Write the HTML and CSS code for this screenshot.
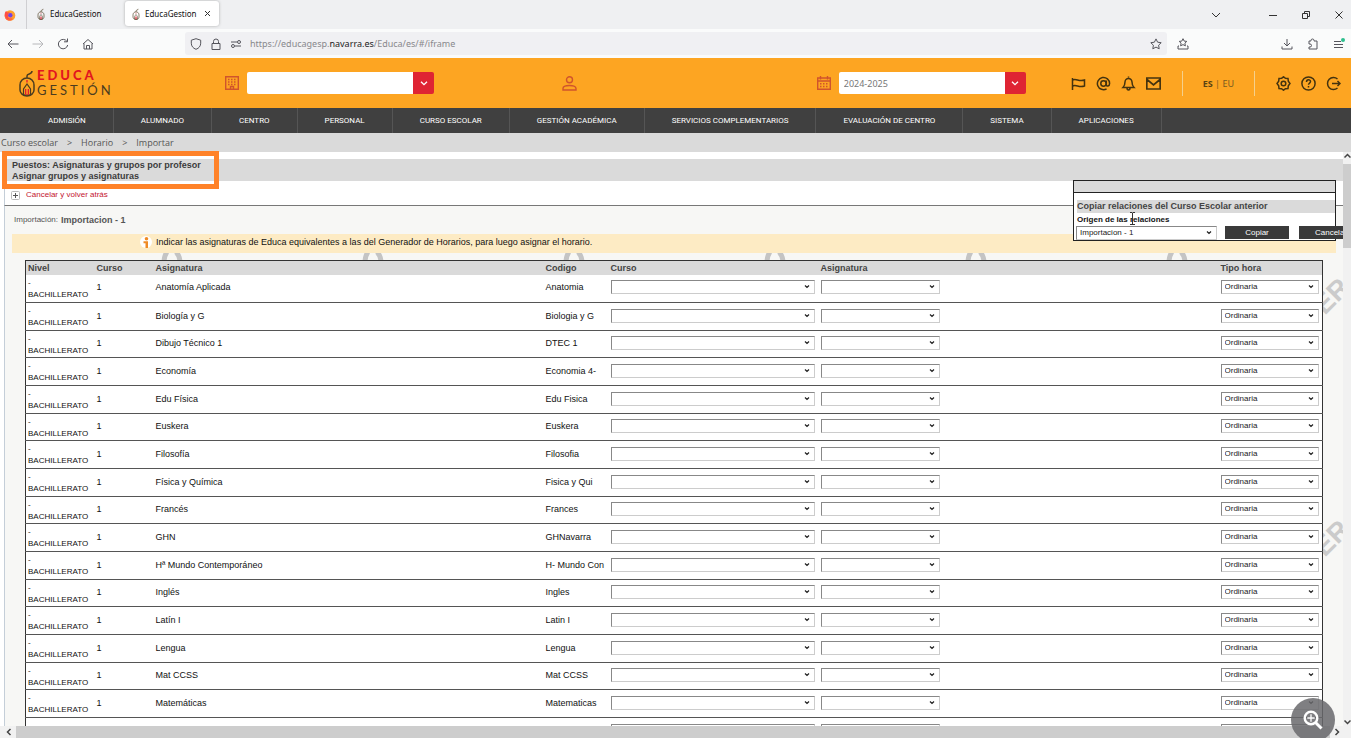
FILE: index.html
```html
<!DOCTYPE html>
<html lang="es">
<head>
<meta charset="utf-8">
<title>EducaGestion</title>
<link rel="stylesheet" href="styles.css">
</head>
<body>
<svg class="sprite" aria-hidden="true">
  <symbol id="mouse" viewBox="0 0 18 28"><path d="M9 9V7c0-3 5-1 5-5M9 9c-4 0-7 3-7 7v5c0 3 3 6 7 6s7-3 7-6v-5c0-4-3-7-7-7z" fill="none" stroke="#4b3c20" stroke-width="1.500"/><path d="M5.500 26v-6L9 15l3.500 5v6z" fill="none" stroke="#4b3c20" stroke-width="1.200"/><path d="M8.300 13.500V11h1.400v2.500M7 20h1.300v6H7zM9.700 20H11v6H9.700z" fill="#e3202f"/></symbol>
</svg>

<div class="tabs">
  <span class="firefox"><svg width="12" height="12" viewBox="0 0 12 12"><circle cx="6" cy="6.500" r="5.300" fill="#ffa02e"/><path d="M.7 5c0 5 4 7 8 5-2 3-9 2-8-5z" fill="#f03a8f"/><path d="M.7 5c0-1 .5-2 1.300-3l1.500 1.500L6 3 4 5v3c1 2 4 2 5 0-1 4-8 4-8.300-3z" fill="#ff4f45"/><circle cx="6.300" cy="6.300" r="2.200" fill="#7542e5"/></svg></span>
  <button class="tab"><svg width="8" height="12"><use href="#mouse"/></svg>EducaGestion</button>
  <button class="tab active"><svg width="8" height="12"><use href="#mouse"/></svg>EducaGestion<svg class="tab-x" width="7" height="7" viewBox="0 0 7 7"><path d="M1 1l5 5M6 1L1 6"/></svg></button>
  <div class="window">
    <button aria-label="Listar pestañas"><svg width="10" height="6" viewBox="0 0 10 6"><path d="M1 1l4 4 4-4"/></svg></button>
    <button class="gap" aria-label="Minimizar"><svg width="8" height="8" viewBox="0 0 8 8"><path d="M0 4.500h8"/></svg></button>
    <button aria-label="Restaurar"><svg width="8" height="8" viewBox="0 0 8 8"><path d="M.5 2.500h5v5h-5zM2.500 2.500v-2h5v5h-2"/></svg></button>
    <button aria-label="Cerrar"><svg width="8" height="8" viewBox="0 0 8 8"><path d="M.5.5l7 7M7.500.5l-7 7"/></svg></button>
  </div>
</div>

<div class="toolbar">
  <div class="navbuttons">
    <button aria-label="Atrás"><svg width="12" height="12" viewBox="0 0 12 12"><path d="M11.500 6H1M5 2L1 6l4 4"/></svg></button>
    <button class="off" aria-label="Adelante"><svg width="12" height="12" viewBox="0 0 12 12"><path d="M.5 6H11M7 2l4 4-4 4"/></svg></button>
    <button aria-label="Recargar"><svg width="12" height="12" viewBox="0 0 12 12"><path d="M10 3.500A4.700 4.700 0 1 0 10.700 7M10.500.5v3.300H7"/></svg></button>
    <button aria-label="Inicio"><svg width="12" height="12" viewBox="0 0 12 12"><path d="M1 6l5-4.500L11 6M2 5.500v5.500h8V5.500M4.500 11V7.500h3V11"/></svg></button>
  </div>
  <div class="address">
    <svg width="12" height="12" viewBox="0 0 12 12"><path d="M6 .7l4.700 1.500v3C10.700 8 9 10.300 6 11.300 3 10.300 1.300 8 1.300 5.200v-3z"/></svg>
    <svg width="12" height="12" viewBox="0 0 12 12"><path d="M2 5.500h8v6H2zM3.500 5.500V3.500a2.500 2.500 0 0 1 5 0v2"/></svg>
    <svg width="12" height="12" viewBox="0 0 12 12"><path d="M1 4h6M5 8h6"/><circle cx="9" cy="4" r="1.500"/><circle cx="3" cy="8" r="1.500"/></svg>
    <span class="url">https://educagesp.<b>navarra.es</b>/Educa/es/#/iframe</span>
    <svg width="12" height="12" viewBox="0 0 12 12"><path d="M6 .9l1.600 3.300 3.600.5-2.600 2.500.6 3.600L6 9.100l-3.200 1.700.6-3.600L.8 4.700l3.600-.5z"/></svg>
  </div>
  <svg width="12" height="12" viewBox="0 0 12 12"><path d="M6 .7l1.200 2.400 2.600.3-1.900 1.800.5 2.600L6 6.600 3.600 7.800l.5-2.600-1.900-1.800 2.600-.3zM2 8H1v3h10V8h-1"/></svg>
  <div class="tools">
    <svg width="12" height="12" viewBox="0 0 12 12"><path d="M6 1v7M3 5l3 3 3-3M1 8.500V11h10V8.500"/></svg>
    <svg width="12" height="12" viewBox="0 0 12 12"><path d="M4 3V2.500a1.500 1.500 0 0 1 3 0V3h3v8H2V9h1a1.300 1.300 0 0 0 0-3H2V3z"/></svg>
    <svg width="12" height="12" viewBox="0 0 12 12"><path d="M1 3.500h7M1 6.500h9M1 9.500h9"/><circle class="dot" cx="10" cy="2" r="2"/></svg>
  </div>
</div>

<header class="header">
  <a class="logo" href="#"><svg width="18" height="28"><use href="#mouse"/></svg><span><strong>EDUCA</strong><em>GESTIÓN</em></span></a>
  <div class="picker">
    <svg width="14" height="14" viewBox="0 0 14 14"><path d="M.7.7h12.600v12.600H.7zM5.500 13v-2.500h3V13"/><path d="M3 3.500h8M3 6h8M3 8.500h8" stroke-dasharray="1.500 1.500"/></svg>
    <input type="text" aria-label="Centro"><button aria-label="Elegir centro"><svg width="8" height="5" viewBox="0 0 8 5"><path d="M1 .7l3 3 3-3"/></svg></button>
  </div>
  <svg class="person" width="15" height="15" viewBox="0 0 15 15"><circle cx="7.500" cy="3.800" r="3"/><path d="M1 14v-1.500C1 8.500 14 8.500 14 12.500V14z"/></svg>
  <div class="picker">
    <svg width="14" height="14" viewBox="0 0 14 14"><path d="M.7 2h12.600v11.300H.7zM.7 5h12.600M3.500 0v3.500M10.500 0v3.500"/><path d="M3 7.800h8M3 10.500h8" stroke-dasharray="1.500 1.500"/></svg>
    <input type="text" aria-label="Curso escolar" value="2024-2025"><button aria-label="Elegir curso"><svg width="8" height="5" viewBox="0 0 8 5"><path d="M1 .7l3 3 3-3"/></svg></button>
  </div>
  <div class="actions">
    <svg width="15" height="15" viewBox="0 0 15 15"><path d="M1.500 2v12M1.500 4c4-2 6 2 12 0v6c-6 2-8-2-12 0"/></svg>
    <svg width="15" height="15" viewBox="0 0 15 15"><circle cx="7.500" cy="7.500" r="2.700"/><path d="M10.300 4.500v4c0 2.500 3.300 2 3.300-1a6.100 6.100 0 1 0-3 5.300"/></svg>
    <svg width="15" height="15" viewBox="0 0 15 15"><path d="M7.500.5v1M2 11.500c2-2 2-3 2-5.500a3.500 3.500 0 0 1 7 0c0 2.500 0 3.500 2 5.500zM6 12c0 2.500 3 2.500 3 0"/></svg>
    <svg width="15" height="15" viewBox="0 0 15 15"><path d="M.8 2h13.400v11H.8zM1 3.500L7.500 9 14 3.500" stroke-width="1.700"/></svg>
  </div>
  <div class="langs"><a href="#"><b>ES</b></a> | <a href="#">EU</a></div>
  <div class="actions">
    <svg width="15" height="15" viewBox="0 0 15 15"><path d="M5.500 2.300L7.500.8l2 1.500 2.500.2.300 2.600 1.700 2.400-1.700 2.400-.3 2.600-2.500.2-2 1.500-2-1.500-2.500-.2-.3-2.600L1 7.500l1.700-2.400.3-2.600z"/><circle cx="7.500" cy="7.500" r="2.300"/></svg>
    <svg width="15" height="15" viewBox="0 0 15 15"><circle cx="7.500" cy="7.500" r="6.600"/><path d="M5.500 6c0-3 4-2.800 4-.4C9.500 7 7.500 7.200 7.500 8.800M7.500 10v1.500"/></svg>
    <svg width="15" height="15" viewBox="0 0 15 15"><path d="M11.500 3a6 6 0 1 0 0 9M6 7.500h8M11.500 5L14 7.500 11.500 10"/></svg>
  </div>
</header>

<nav class="menu">
  <a href="#">ADMISIÓN</a><a href="#">ALUMNADO</a><a href="#">CENTRO</a><a href="#">PERSONAL</a><a href="#">CURSO ESCOLAR</a><a href="#">GESTIÓN ACADÉMICA</a><a href="#">SERVICIOS COMPLEMENTARIOS</a><a href="#">EVALUACIÓN DE CENTRO</a><a href="#">SISTEMA</a><a href="#">APLICACIONES</a>
</nav>
<div class="crumbs"><span>Curso escolar</span><span>&gt;</span><span>Horario</span><span>&gt;</span><span>Importar</span></div>

<main class="frame">
  <div class="page">
    <h1 class="title">Puestos: Asignaturas y grupos por profesor<br>Asignar grupos y asignaturas</h1>
    <div class="back"><svg width="9" height="9" viewBox="0 0 9 9"><rect x=".5" y=".5" width="8" height="8" rx="1" fill="#fff" stroke="#bbb"/><path d="M2 4.500h5M4.500 2v5" stroke="#555"/></svg><a href="#">Cancelar y volver atrás</a></div>
    <div class="body">
      <p class="import"><span>Importación:</span> <b>Importacion - 1</b></p>
      <p class="info"><svg width="12" height="12" viewBox="0 0 12 12"><circle cx="6" cy="6" r="6" fill="#fff"/><circle cx="6.500" cy="2.800" r="1.800" fill="#ef8a25"/><path d="M3.500 5.200H8V12H5.500V7.200h-2z" fill="#ef8a25"/></svg>Indicar las asignaturas de Educa equivalentes a las del Generador de Horarios, para luego asignar el horario.</p>
      <div class="marks" aria-hidden="true">
        <svg viewBox="0 0 24 9"><path d="M7-1Q4 3 4 10M16-1Q20 3 20 10"/></svg><svg viewBox="0 0 24 9"><path d="M7-1Q4 3 4 10M16-1Q20 3 20 10"/></svg><svg viewBox="0 0 24 9"><path d="M7-1Q4 3 4 10M16-1Q20 3 20 10"/></svg><svg viewBox="0 0 24 9"><path d="M7-1Q4 3 4 10M16-1Q20 3 20 10"/></svg><svg viewBox="0 0 24 9"><path d="M7-1Q4 3 4 10M16-1Q20 3 20 10"/></svg><svg viewBox="0 0 24 9"><path d="M7-1Q4 3 4 10M16-1Q20 3 20 10"/></svg>
      </div>
      <span class="stamp stamp-a" aria-hidden="true">ER</span>
      <span class="stamp stamp-b" aria-hidden="true">ER</span>
      <table class="grid">
        <colgroup><col class="c-nivel"><col class="c-curso"><col class="c-asig"><col class="c-cod"><col class="c-sel"><col><col class="c-tipo"></colgroup>
        <thead><tr><th>Nivel</th><th>Curso</th><th>Asignatura</th><th>Codigo</th><th>Curso</th><th>Asignatura</th><th>Tipo hora</th></tr></thead>
        <tbody>
          <tr><td>-<br>BACHILLERATO</td><td>1</td><td>Anatomía Aplicada</td><td>Anatomia</td><td><select class="wide" aria-label="Curso"></select></td><td><select class="mid" aria-label="Asignatura"></select></td><td><select class="tipo" aria-label="Tipo hora"><option>Ordinaria</option></select></td></tr>
          <tr><td>-<br>BACHILLERATO</td><td>1</td><td>Biología y G</td><td>Biologia y G</td><td><select class="wide" aria-label="Curso"></select></td><td><select class="mid" aria-label="Asignatura"></select></td><td><select class="tipo" aria-label="Tipo hora"><option>Ordinaria</option></select></td></tr>
          <tr><td>-<br>BACHILLERATO</td><td>1</td><td>Dibujo Técnico 1</td><td>DTEC 1</td><td><select class="wide" aria-label="Curso"></select></td><td><select class="mid" aria-label="Asignatura"></select></td><td><select class="tipo" aria-label="Tipo hora"><option>Ordinaria</option></select></td></tr>
          <tr><td>-<br>BACHILLERATO</td><td>1</td><td>Economía</td><td>Economia 4-</td><td><select class="wide" aria-label="Curso"></select></td><td><select class="mid" aria-label="Asignatura"></select></td><td><select class="tipo" aria-label="Tipo hora"><option>Ordinaria</option></select></td></tr>
          <tr><td>-<br>BACHILLERATO</td><td>1</td><td>Edu Física</td><td>Edu Fisica</td><td><select class="wide" aria-label="Curso"></select></td><td><select class="mid" aria-label="Asignatura"></select></td><td><select class="tipo" aria-label="Tipo hora"><option>Ordinaria</option></select></td></tr>
          <tr><td>-<br>BACHILLERATO</td><td>1</td><td>Euskera</td><td>Euskera</td><td><select class="wide" aria-label="Curso"></select></td><td><select class="mid" aria-label="Asignatura"></select></td><td><select class="tipo" aria-label="Tipo hora"><option>Ordinaria</option></select></td></tr>
          <tr><td>-<br>BACHILLERATO</td><td>1</td><td>Filosofía</td><td>Filosofia</td><td><select class="wide" aria-label="Curso"></select></td><td><select class="mid" aria-label="Asignatura"></select></td><td><select class="tipo" aria-label="Tipo hora"><option>Ordinaria</option></select></td></tr>
          <tr><td>-<br>BACHILLERATO</td><td>1</td><td>Física y Química</td><td>Fisica y Qui</td><td><select class="wide" aria-label="Curso"></select></td><td><select class="mid" aria-label="Asignatura"></select></td><td><select class="tipo" aria-label="Tipo hora"><option>Ordinaria</option></select></td></tr>
          <tr><td>-<br>BACHILLERATO</td><td>1</td><td>Francés</td><td>Frances</td><td><select class="wide" aria-label="Curso"></select></td><td><select class="mid" aria-label="Asignatura"></select></td><td><select class="tipo" aria-label="Tipo hora"><option>Ordinaria</option></select></td></tr>
          <tr><td>-<br>BACHILLERATO</td><td>1</td><td>GHN</td><td>GHNavarra</td><td><select class="wide" aria-label="Curso"></select></td><td><select class="mid" aria-label="Asignatura"></select></td><td><select class="tipo" aria-label="Tipo hora"><option>Ordinaria</option></select></td></tr>
          <tr><td>-<br>BACHILLERATO</td><td>1</td><td>Hª Mundo Contemporáneo</td><td>H- Mundo Con</td><td><select class="wide" aria-label="Curso"></select></td><td><select class="mid" aria-label="Asignatura"></select></td><td><select class="tipo" aria-label="Tipo hora"><option>Ordinaria</option></select></td></tr>
          <tr><td>-<br>BACHILLERATO</td><td>1</td><td>Inglés</td><td>Ingles</td><td><select class="wide" aria-label="Curso"></select></td><td><select class="mid" aria-label="Asignatura"></select></td><td><select class="tipo" aria-label="Tipo hora"><option>Ordinaria</option></select></td></tr>
          <tr><td>-<br>BACHILLERATO</td><td>1</td><td>Latín I</td><td>Latin I</td><td><select class="wide" aria-label="Curso"></select></td><td><select class="mid" aria-label="Asignatura"></select></td><td><select class="tipo" aria-label="Tipo hora"><option>Ordinaria</option></select></td></tr>
          <tr><td>-<br>BACHILLERATO</td><td>1</td><td>Lengua</td><td>Lengua</td><td><select class="wide" aria-label="Curso"></select></td><td><select class="mid" aria-label="Asignatura"></select></td><td><select class="tipo" aria-label="Tipo hora"><option>Ordinaria</option></select></td></tr>
          <tr><td>-<br>BACHILLERATO</td><td>1</td><td>Mat CCSS</td><td>Mat CCSS</td><td><select class="wide" aria-label="Curso"></select></td><td><select class="mid" aria-label="Asignatura"></select></td><td><select class="tipo" aria-label="Tipo hora"><option>Ordinaria</option></select></td></tr>
          <tr><td>-<br>BACHILLERATO</td><td>1</td><td>Matemáticas</td><td>Matematicas</td><td><select class="wide" aria-label="Curso"></select></td><td><select class="mid" aria-label="Asignatura"></select></td><td><select class="tipo" aria-label="Tipo hora"><option>Ordinaria</option></select></td></tr>
          <tr><td>-<br>&nbsp;</td><td></td><td></td><td></td><td><select class="wide" aria-label="Curso"></select></td><td><select class="mid" aria-label="Asignatura"></select></td><td><select class="tipo" aria-label="Tipo hora"></select></td></tr>
        </tbody>
      </table>
    </div>
    <section class="dialog">
      <div class="dialog-bar"></div>
      <h2>Copiar relaciones del Curso Escolar anterior</h2>
      <label for="origen">Origen de las relaciones</label>
      <div class="dialog-row"><select id="origen"><option>Importacion - 1</option></select><button>Copiar</button><button>Cancelar</button></div>
      <svg class="caret" width="7" height="13" viewBox="0 0 7 13"><path d="M1 .5h2l.5.5.5-.5h2M3.500 1v11M1 12.500h5" fill="none" stroke="#333"/></svg>
    </section>
  </div>
  <div class="vbar"><svg width="8" height="8" viewBox="0 0 8 8"><path d="M1.500 5.500L4.500 2.500l3 3"/></svg><i></i><svg class="end" width="8" height="8" viewBox="0 0 8 8"><path d="M1.500 2.500l3 3 3-3"/></svg></div>
  <div class="hbar"><svg width="8" height="8" viewBox="0 0 8 8"><path d="M5.500 1l-3 3 3 3"/></svg><i></i><svg width="8" height="8" viewBox="0 0 8 8"><path d="M2.500 1l3 3-3 3"/></svg></div>
  <div class="highlight"></div>
</main>
<button class="zoom" aria-label="Ampliar"><svg width="22" height="22" viewBox="0 0 22 22"><circle cx="9" cy="9" r="6.300" fill="none" stroke="#fff" stroke-width="2.400"/><path d="M13.500 13.500l6 6" stroke="#fff" stroke-width="3"/><path d="M9 5.300v7.400M5.300 9h7.400" stroke="#fff" stroke-width="1.300"/></svg></button>
</body>
</html>
```

FILE: styles.css
```css
* { box-sizing: border-box; }
body {
  margin: 0;
  height: 100vh;
  display: flex;
  flex-direction: column;
  overflow: hidden;
  background: #fff;
  font: 9px/12px "Liberation Sans", Arial, sans-serif;
  color: #111;
}
a { color: inherit; text-decoration: none; }
button { border: 0; padding: 0; background: none; font: inherit; color: inherit; }
h1, h2, p { margin: 0; }
svg { display: block; flex: none; }
.sprite { position: absolute; width: 0; height: 0; }

/* Browser chrome */
.tabs { display: flex; flex: none; height: 29px; background: #eff0f2; font: 8px/12px "Noto Sans", sans-serif; }
.tabs path { fill: none; }
.tabs .firefox path { fill: #ff4f45; }
.tab-x path, .window path { stroke: #333; }
.firefox { display: flex; align-items: center; width: 27px; padding-left: 4px; border-right: 1px solid #cfcfd2; }
.tab { display: flex; align-items: center; gap: 5px; width: 94px; margin: 1px 4px 3px 0; padding-left: 10px; border-radius: 3px; }
.tab.active { background: #fff; box-shadow: 0 0 3px #aaa; padding-left: 7px; }
.tab-x { margin-left: 2px; }
.window { display: flex; align-items: center; gap: 25px; margin-left: auto; padding-right: 8px; }
.window .gap { margin-left: 23px; }
.toolbar { display: flex; flex: none; align-items: center; height: 29px; padding: 0 6px 0 7px; background: #fafbfb; }
.toolbar svg { fill: none; stroke: #55555c; stroke-width: 1; }
.navbuttons { display: flex; gap: 13px; width: 178px; }
.off { opacity: .4; }
.address { display: flex; flex: 1; align-items: center; gap: 8px; max-width: 982px; height: 23px; padding: 0 5px; margin-right: 10px; border-radius: 3px; background: #f0f0f3; }
.url { flex: 1; font: 9px/14px "Noto Sans", sans-serif; color: #88888c; }
.url b { font-weight: 400; color: #222; }
.tools { display: flex; gap: 14px; margin-left: auto; }
.toolbar .dot { fill: #2dbf8e; stroke: none; }

/* Application header */
.header { display: flex; flex: none; align-items: center; height: 50px; padding: 0 10px 0 18px; background: #fda522; }
.logo { display: flex; align-items: center; gap: 1px; width: 207px; }
.logo span { display: grid; font: 13px/15px Lato, sans-serif; letter-spacing: 3px; color: #4b3c20; }
.logo strong { color: #e2151f; font-weight: 900; }
.logo em { font-style: normal; }
.picker { display: flex; align-items: center; }
.picker > svg, .person { margin-right: 8px; fill: none; stroke: #d0542c; stroke-width: 1.400; }
.picker input { width: 166px; height: 22px; border: 0; border-radius: 2px 0 0 2px; padding: 0 5px; font: 9px/12px "Noto Sans", sans-serif; color: #777; }
.picker button { display: grid; place-items: center; width: 21px; height: 22px; border-radius: 0 2px 2px 0; background: #df2433; }
.picker button path { fill: none; stroke: #fff; stroke-width: 1.300; }
.person { margin: 0 auto 0 128px; }
.actions { display: flex; gap: 10px; }
.picker + .actions { margin-left: 45px; }
.actions svg { fill: none; stroke: #44330f; stroke-width: 1.500; }
.langs { height: 25px; margin: 0 21px; padding: 0 20px; border: solid #f5d08c; border-width: 0 1px; font: 9px/26px "Noto Sans", sans-serif; color: #7a5b20; }
.langs b { color: #5b4313; }

.menu { display: flex; flex: none; height: 25px; padding-left: 21px; background: #404040; }
.menu a { padding: 0 27px; border-right: 1px solid #555; font: 8px/25px Roboto, sans-serif; color: #fff; }
.crumbs { display: flex; flex: none; gap: 9px; height: 19px; padding-left: 1px; background: #dadada; font: 9px/20px "Open Sans", sans-serif; color: #555; }

/* Framed page with its scroll bars */
.frame { position: relative; flex: 1; min-height: 0; display: grid; grid-template: minmax(0, 1fr) 12px / minmax(0, 1fr) 8px; }
.page { position: relative; overflow: hidden; padding: 7px 0 0 4px; }
.title { padding: 1px 0 0 8px; height: 22px; background: #dadada; font-size: 9px; line-height: 11px; color: #3c3c3c; }
.back { display: flex; align-items: center; gap: 6px; height: 25px; padding: 4px 0 0 6px; border-left: 1px solid #c4ced8; border-bottom: 1px solid #777; font-size: 8px; color: #c4142f; }
.body { position: relative; height: 100%; padding: 7px 20px 0 20px; border-left: 1px solid #c4ced8; background: #f7f7f5; }
.import { display: flex; gap: 3px; margin-left: -11px; line-height: 14px; color: #555; }
.import span { font-size: 8px; }
.info { display: flex; gap: 4px; height: 19px; margin: 7px -13px 0; padding: 2px 0 0 128px; background: #fdebc4; }
.marks { display: flex; gap: 177px; height: 7px; padding-left: 135px; overflow: hidden; }
.marks svg { width: 24px; height: 9px; }
.marks path { fill: none; stroke: #c4c4c4; stroke-width: 5; }
.stamp { position: absolute; right: -8px; font: bold 27px/28px "Liberation Sans", sans-serif; color: #cbcbcb; transform: rotate(-45deg); }
.stamp-a { top: 76px; }
.stamp-b { top: 318px; }

.grid { position: relative; width: 100%; table-layout: fixed; border-collapse: collapse; border: 1px solid #333; background: #fff; }
.c-nivel { width: 69px; }
.c-curso { width: 59px; }
.c-asig { width: 390px; }
.c-cod { width: 65px; }
.c-sel { width: 210px; }
.c-tipo { width: 104px; }
.grid th { height: 14px; padding: 0 2px; background: #dadada; text-align: left; color: #444; }
.grid td { height: 28px; padding: 0 2px 2px; border-bottom: 1px solid #555; white-space: nowrap; }
.grid tr:nth-child(3n) td { height: 27px; }
.grid td:first-child { padding: 1px 2px 0; font-size: 8px; }
select { display: block; height: 14px; border: 1px solid; border-color: #888 #ccc #ccc #888; border-radius: 0; padding: 0 3px; appearance: none; font: 8px/12px "Liberation Sans", sans-serif; color: #222; background: #fff url("data:image/svg+xml,%3Csvg xmlns='http://www.w3.org/2000/svg' width='6' height='4'%3E%3Cpath d='M1 .5l2 2 2-2' fill='none' stroke='%23222' stroke-width='1.2'/%3E%3C/svg%3E") no-repeat right 4px center; }
.wide { width: 204px; }
.mid { width: 119px; }
.tipo { width: 98px; }

/* Floating copy dialog */
.dialog { position: absolute; top: 28px; right: 7px; width: 263px; height: 61px; border: 1px solid #222; background: #fff; }
.dialog-bar { height: 12px; border-bottom: 1px solid #222; background: #dadada; }
.dialog h2 { margin: 7px 0 0 3px; height: 13px; background: #dadada; font-size: 9px; line-height: 13px; color: #444; white-space: nowrap; }
.dialog label { display: block; margin-left: 3px; font-size: 8px; font-weight: 700; line-height: 13px; }
.dialog-row { display: flex; gap: 10px; margin-left: 2px; }
.dialog-row select { width: 141px; margin-right: -2px; flex: none; }
.dialog-row button { flex: none; width: 64px; height: 13px; background: #3a3a3a; color: #fff; font-size: 8px; line-height: 12px; }
.caret { position: absolute; left: 55px; top: 31px; }

.vbar, .hbar { display: flex; background: #f1f1f1; }
.vbar { flex-direction: column; }
.vbar i { height: 84px; margin-top: 4px; background: #cdcdcd; }
.vbar .end { margin-top: auto; }
.hbar { grid-column: 1 / 3; align-items: center; padding: 0 10px 0 5px; gap: 3px; }
.hbar i { flex: 1; height: 12px; background: #cdcdcd; }
.vbar path, .hbar path { fill: none; stroke: #444; stroke-width: 1.500; }
.highlight { position: absolute; left: 2px; top: -1px; width: 217px; height: 38px; border: 5px solid #ff8228; }
.zoom { position: fixed; right: 16px; bottom: -4px; display: grid; place-items: center; width: 44px; height: 44px; border-radius: 50%; background: rgba(105, 105, 108, .85); }
```
